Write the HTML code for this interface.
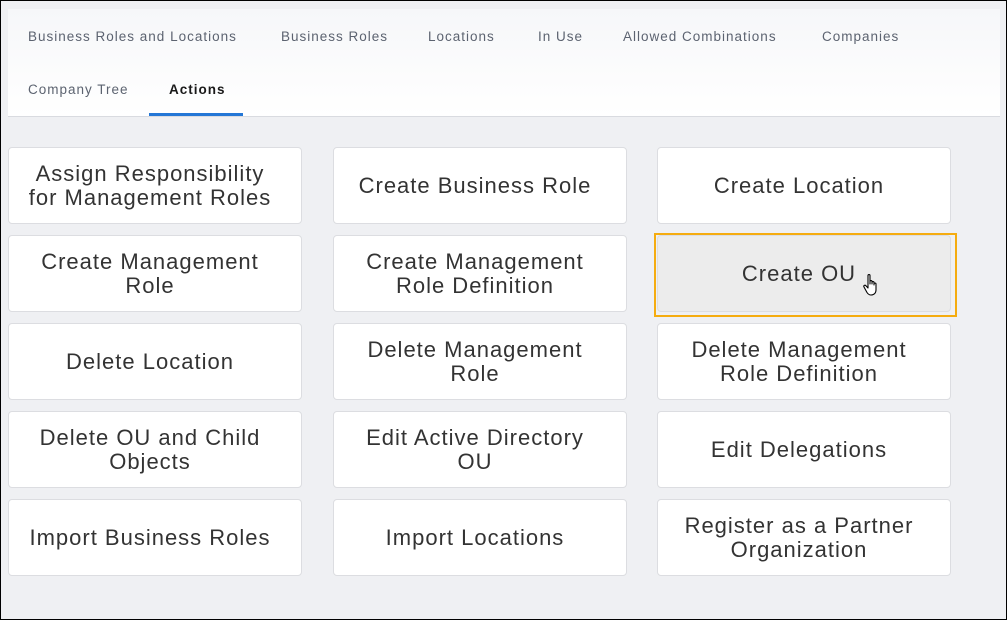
<!DOCTYPE html>
<html><head><meta charset="utf-8"><style>
*{box-sizing:border-box;margin:0;padding:0}
body{width:1007px;height:620px;overflow:hidden;background:#eff0f3;font-family:"Liberation Sans",sans-serif;position:relative}
.frame{position:absolute;left:0;top:0;width:1007px;height:620px;border:1px solid #000;pointer-events:none}
.hdr{position:absolute;left:8px;top:9px;width:992px;height:108px;background:linear-gradient(#f6f7f9,#fff);border-bottom:1px solid #d9dbe0}
.tab{position:absolute;font-size:13.5px;color:#5c6370;letter-spacing:1px;white-space:nowrap}
.act{color:#1a1a1a;font-weight:bold}
.ul{position:absolute;left:149px;top:113px;width:94px;height:3px;background:#2477d6}
.b{position:absolute;width:294px;height:77px;background:#fff;border:1px solid #dcdde1;border-radius:4px;display:flex;align-items:center;justify-content:center;text-align:center;font-size:22px;line-height:24px;color:#333;letter-spacing:1px;padding:0 26px 0 16px}
.hl{position:absolute;left:654px;top:233px;width:303px;height:84px;border:2px solid #f5ac10}
</style></head><body>
<div class="hdr"></div>
<div class="tab" style="left:28px;top:29px">Business Roles and Locations</div>
<div class="tab" style="left:281px;top:29px">Business Roles</div>
<div class="tab" style="left:428px;top:29px">Locations</div>
<div class="tab" style="left:538px;top:29px">In Use</div>
<div class="tab" style="left:623px;top:29px">Allowed Combinations</div>
<div class="tab" style="left:822px;top:29px">Companies</div>
<div class="tab" style="left:28px;top:82px">Company Tree</div>
<div class="tab act" style="left:169px;top:82px">Actions</div>
<div class="ul"></div>

<div class="b" style="left:8px;top:147px">Assign Responsibility for Management Roles</div>
<div class="b" style="left:333px;top:147px">Create Business Role</div>
<div class="b" style="left:657px;top:147px">Create Location</div>

<div class="b" style="left:8px;top:235px">Create Management Role</div>
<div class="b" style="left:333px;top:235px">Create Management Role Definition</div>
<div class="hl"></div>
<div class="b" style="left:657px;top:235px;background:#ececec">Create OU</div>
<svg style="position:absolute;left:862px;top:273px" width="22" height="26" viewBox="0 0 22 26"><path d="M6 2.5c0-1.3 2-1.3 2 0V11V8.5c0-1.3 2-1.3 2 0V11V9.5c0-1.3 2-1.3 2 0V12V11c0-1.3 2-1.3 2 0v6c0 3-2 5-5 5H9c-2 0-3-1-4-2.5L2 14c-.8-1.2.8-2.4 1.8-1.4L6 15z" fill="#fff" stroke="#000" stroke-width="1.1" stroke-linejoin="round"/></svg>

<div class="b" style="left:8px;top:323px">Delete Location</div>
<div class="b" style="left:333px;top:323px">Delete Management Role</div>
<div class="b" style="left:657px;top:323px">Delete Management Role Definition</div>

<div class="b" style="left:8px;top:411px">Delete OU and Child Objects</div>
<div class="b" style="left:333px;top:411px">Edit Active Directory OU</div>
<div class="b" style="left:657px;top:411px">Edit Delegations</div>

<div class="b" style="left:8px;top:499px">Import Business Roles</div>
<div class="b" style="left:333px;top:499px">Import Locations</div>
<div class="b" style="left:657px;top:499px">Register as a Partner Organization</div>
<div class="frame"></div>
</body></html>
